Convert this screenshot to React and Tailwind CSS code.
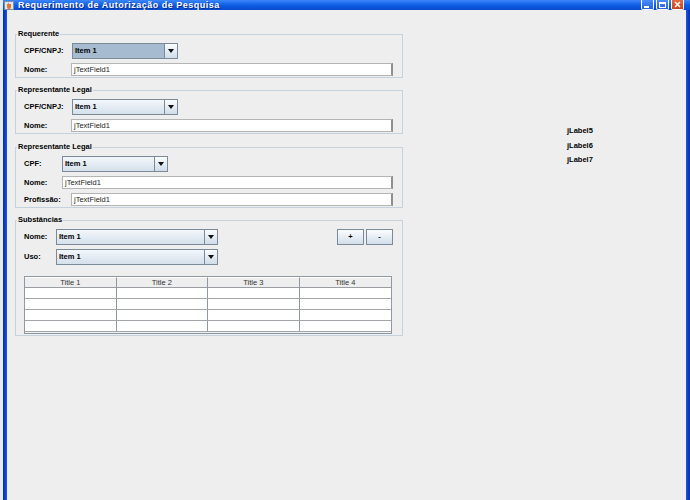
import React from 'react';

const font = { fontFamily: '"Liberation Sans", Arial, sans-serif' };

// Ocean-style combo box
const Combo = ({ width, focused }) => (
  <div
    className={`flex h-[16px] border border-[#7a8a99] ${width} ${
      focused ? 'bg-[#a6bbcf]' : 'bg-gradient-to-b from-[#f3f7fb] to-[#d5e0eb]'
    }`}
  >
    <div className="flex-1 pl-[2px] flex items-center font-bold text-black">Item 1</div>
    <div className="w-[13px] border-l border-[#7a8a99] bg-gradient-to-b from-[#fbfdff] to-[#cfdce9] flex items-center justify-center">
      <svg width="6" height="4" viewBox="0 0 6 4">
        <path d="M0 0H6L3 4Z" fill="#111" />
      </svg>
    </div>
  </div>
);

const TextField = () => (
  <div className="flex-1 h-[13px] bg-white border border-[#b4b4b4] border-r-[#8f8f8f] border-r-2 pl-[2px] flex items-center text-[#222]">
    jTextField1
  </div>
);

const Row = ({ label, labelW, children, className = 'mt-[4px]' }) => (
  <div className={`flex items-center ${className}`}>
    <div className={`${labelW} font-bold text-black`}>{label}</div>
    {children}
  </div>
);

const Panel = ({ title, className = '', children }) => (
  <div className={`border border-[#c5d1dd] pl-[8px] pr-[9px] pb-[1px] ${className}`}>
    <div className="-mt-[6px] -ml-[7px] w-fit bg-[#eeeeee] px-[1px] h-[10px] leading-[10px] font-bold text-black">
      {title}
    </div>
    {children}
  </div>
);

const TitleButton = ({ children, close }) => (
  <div
    className={`w-[13px] h-[10px] rounded-b-[2px] border border-t-0 border-white flex items-end justify-center pb-[1px] ${
      close ? 'bg-gradient-to-b from-[#e8683f] to-[#c8401e]' : 'bg-gradient-to-b from-[#4b8cf7] to-[#2660e0]'
    }`}
  >
    {children}
  </div>
);

const App = () => {
  const cols = ['Title 1', 'Title 2', 'Title 3', 'Title 4'];
  return (
    <div className="w-[690px] h-[500px] flex overflow-hidden text-[7.5px] leading-[10px]" style={font}>
      {/* desktop strip */}
      <div className="w-[3px] bg-[#e6eaf2]" />

      {/* window */}
      <div className="flex-1 flex flex-col">
        {/* title bar */}
        <div className="h-[10px] flex items-center bg-gradient-to-b from-[#3b86f8] via-[#0d5fe6] to-[#0a4bd0]">
          <div className="w-[10px] h-[9px] ml-[1px] flex items-center justify-center">
            <svg width="10" height="9" viewBox="0 0 10 9">
              <rect x="0.5" y="0.5" width="9" height="8" fill="#dfe6f2" stroke="#7c8fb0" />
              <path d="M3 3h4v3a2 2 0 0 1-4 0z" fill="#e07828" />
              <path d="M4 1.5c1 .5 0 1 1 1.5" stroke="#c45020" strokeWidth="0.6" fill="none" />
            </svg>
          </div>
          <div className="ml-[4px] text-white font-bold text-[9px] tracking-[0.5px] leading-[10px] [text-shadow:1px_1px_0_#0a2a8a]">
            Requerimento de Autorização de Pesquisa
          </div>
          <div className="flex-1" />
          <div className="flex gap-[2px] mr-[6px] self-start">
            <TitleButton>
              <div className="w-[5px] h-[2px] bg-white -ml-[3px]" />
            </TitleButton>
            <TitleButton>
              <div className="w-[7px] h-[6px] border border-white border-t-2" />
            </TitleButton>
            <TitleButton close>
              <svg width="7" height="7" viewBox="0 0 7 7">
                <path d="M1 1L6 6M6 1L1 6" stroke="#fff" strokeWidth="1.6" />
              </svg>
            </TitleButton>
          </div>
        </div>

        <div className="flex-1 flex">
          <div className="w-[4px] bg-gradient-to-r from-[#0a2aa8] to-[#1657e6]" />

          {/* content */}
          <div className="flex-1 bg-[#eeeeee] flex pt-[24px]">
            <div className="w-[388px] ml-[8px] flex flex-col">
              <Panel title="Requerente">
                <Row label="CPF/CNPJ:" labelW="w-[48px]">
                  <Combo width="w-[106px]" focused />
                </Row>
                <Row label="Nome:" labelW="w-[47px]">
                  <TextField />
                </Row>
              </Panel>

              <Panel title="Representante Legal" className="mt-[12px]">
                <Row label="CPF/CNPJ:" labelW="w-[48px]">
                  <Combo width="w-[106px]" />
                </Row>
                <Row label="Nome:" labelW="w-[47px]">
                  <TextField />
                </Row>
              </Panel>

              <Panel title="Representante Legal" className="mt-[13px]">
                <Row label="CPF:" labelW="w-[38px]">
                  <Combo width="w-[106px]" />
                </Row>
                <Row label="Nome:" labelW="w-[38px]">
                  <TextField />
                </Row>
                <Row label="Profissão:" labelW="w-[47px]">
                  <TextField />
                </Row>
              </Panel>

              <Panel title="Substâncias" className="mt-[12px]">
                <Row label="Nome:" labelW="w-[32px]">
                  <Combo width="w-[162px]" />
                  <div className="flex-1" />
                  <div className="flex gap-[2px]">
                    <button className="w-[27px] h-[16px] border border-[#7a8a99] bg-gradient-to-b from-[#fbfdff] to-[#d2deea] font-bold text-black flex items-center justify-center">
                      +
                    </button>
                    <button className="w-[27px] h-[16px] border border-[#7a8a99] bg-gradient-to-b from-[#fbfdff] to-[#d2deea] font-bold text-black flex items-center justify-center">
                      -
                    </button>
                  </div>
                </Row>
                <Row label="Uso:" labelW="w-[32px]">
                  <Combo width="w-[162px]" />
                </Row>

                {/* table */}
                <div className="mt-[11px] w-[368px] border border-[#8e99a4] pb-[1px]">
                  <div className="grid grid-cols-4 h-[11px] border-b border-[#9a9ea3] bg-[#eeeeee]">
                    {cols.map((c, i) => (
                      <div
                        key={c}
                        className={`flex items-center justify-center text-[#333] border-t border-white ${
                          i < 3 ? 'border-r border-r-[#8e99a4]' : ''
                        }`}
                      >
                        {c}
                      </div>
                    ))}
                  </div>
                  {[0, 1, 2, 3].map((r) => (
                    <div key={r} className="grid grid-cols-4 h-[11px] bg-white border-b border-[#a2a6ab]">
                      {cols.map((c, i) => (
                        <div key={c} className={i < 3 ? 'border-r border-[#8e99a4]' : ''} />
                      ))}
                    </div>
                  ))}
                </div>
              </Panel>
            </div>

            {/* loose labels */}
            <div className="ml-[164px] mt-[92px] flex flex-col gap-[4.5px] font-bold text-black">
              <div>jLabel5</div>
              <div>jLabel6</div>
              <div>jLabel7</div>
            </div>
          </div>

          <div className="w-[4px] bg-gradient-to-r from-[#1657e6] to-[#0a2aa8]" />
        </div>
      </div>
    </div>
  );
};

export default App;
